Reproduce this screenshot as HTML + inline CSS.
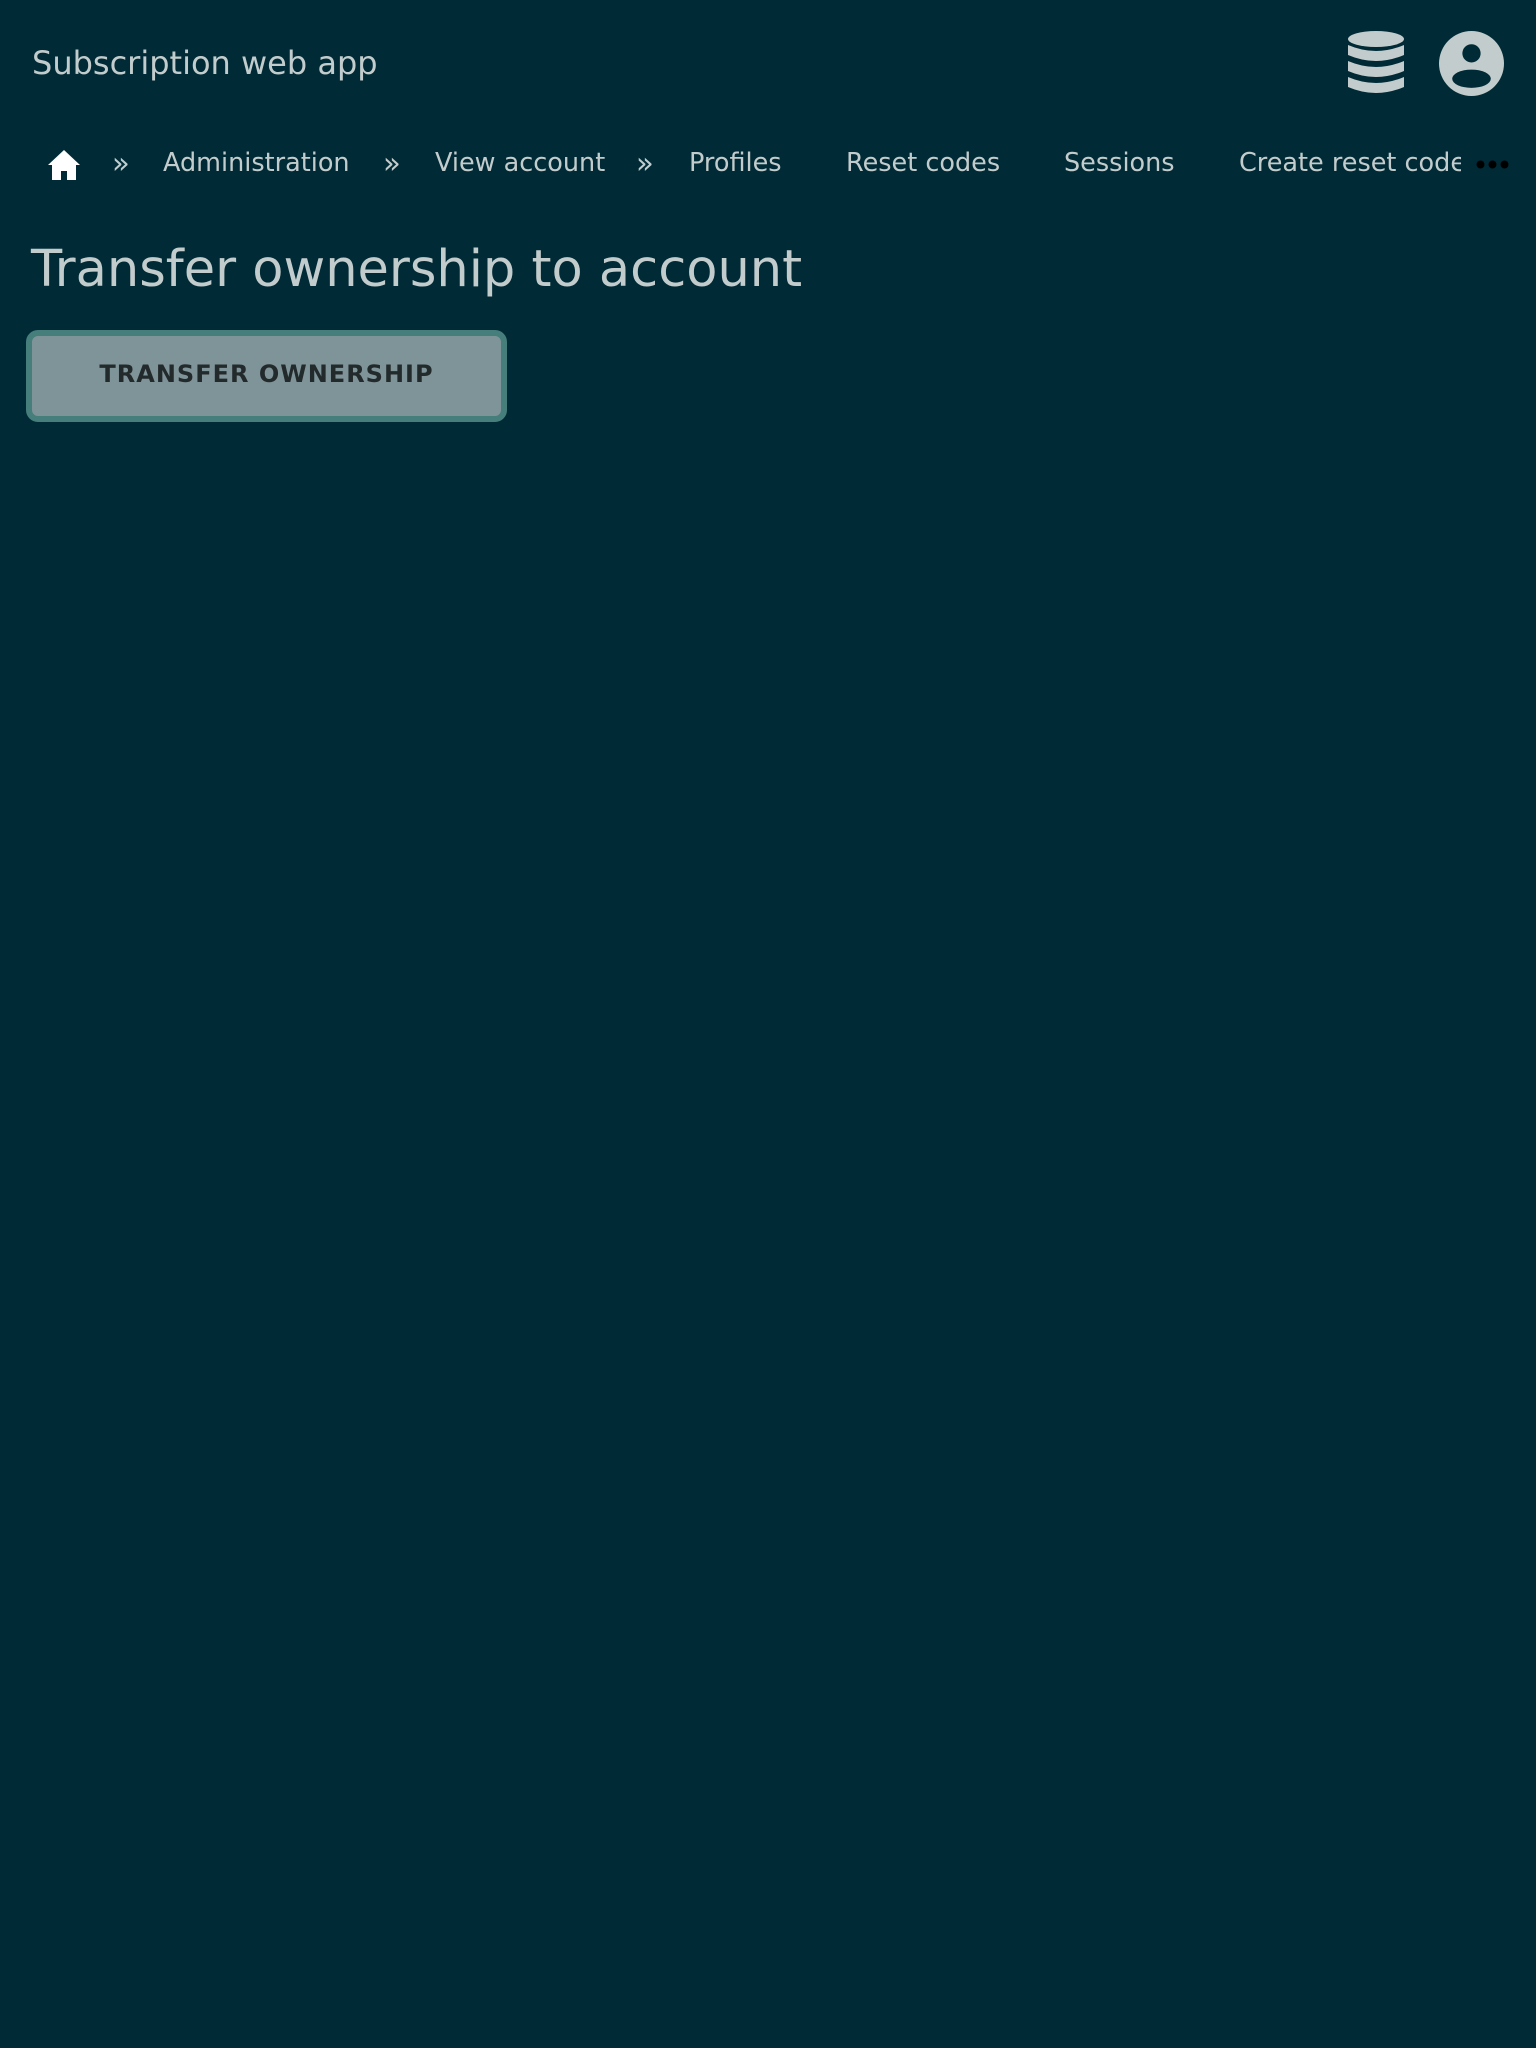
<!DOCTYPE html>
<html><head><style>
body{margin:0;width:1536px;height:2048px;background:#002b36;font-family:"DejaVu Sans","Liberation Sans",sans-serif;color:#c3cccc;position:relative;overflow:hidden}
.a{position:absolute;white-space:nowrap}
.nav{font-size:25.5px;top:147px;line-height:32px}
.sep{font-size:29px;top:145px;line-height:36px}
</style></head><body>
<div class="a" style="left:32px;top:44px;font-size:32px;line-height:38px">Subscription web app</div>
<svg class="a" style="left:1348px;top:31px" width="56" height="64" viewBox="0 0 56 64"><g fill="#c3cccc"><ellipse cx="28" cy="8" rx="28" ry="8"/><path d="M0 14q28 12 56 0v10q-28 12 -56 0z"/><path d="M0 30q28 12 56 0v10q-28 12 -56 0z"/><path d="M0 46q28 12 56 0v10q-28 12 -56 0z"/></g></svg>
<svg class="a" style="left:1439px;top:31px" width="65" height="65" viewBox="0 0 64 64"><circle cx="32" cy="32" r="32" fill="#c3cccc"/><circle cx="32" cy="22" r="9" fill="#002b36"/><ellipse cx="32" cy="47" rx="19" ry="9" fill="#002b36"/></svg>
<svg class="a" style="left:48px;top:150px" width="32" height="30" viewBox="0 0 32 30"><path d="M16 0L0 15h4v15h9v-9h6v9h9V15h4z" fill="#fff"/></svg>
<div class="a sep" style="left:112px">»</div>
<div class="a nav" style="left:163px">Administration</div>
<div class="a sep" style="left:383px">»</div>
<div class="a nav" style="left:435px">View account</div>
<div class="a sep" style="left:636px">»</div>
<div class="a nav" style="left:689px">Profiles</div>
<div class="a nav" style="left:846px">Reset codes</div>
<div class="a nav" style="left:1064px">Sessions</div>
<div class="a nav" style="left:1239px;width:222px;overflow:hidden">Create reset code</div>
<svg class="a" style="left:1476px;top:160px" width="33" height="9"><circle cx="4.5" cy="4.5" r="4" fill="#000"/><circle cx="16.5" cy="4.5" r="4" fill="#000"/><circle cx="28.5" cy="4.5" r="4" fill="#000"/></svg>
<div class="a" style="left:31px;top:238px;font-size:51px;line-height:64px">Transfer ownership to account</div>
<div class="a" style="left:26px;top:330px;width:469px;height:80px;border:6px solid #467e7c;border-radius:12px;background:#7f9499;color:#232a2c;font-weight:bold;font-size:24px;letter-spacing:1px;text-align:center;line-height:76px">TRANSFER OWNERSHIP</div>
</body></html>
